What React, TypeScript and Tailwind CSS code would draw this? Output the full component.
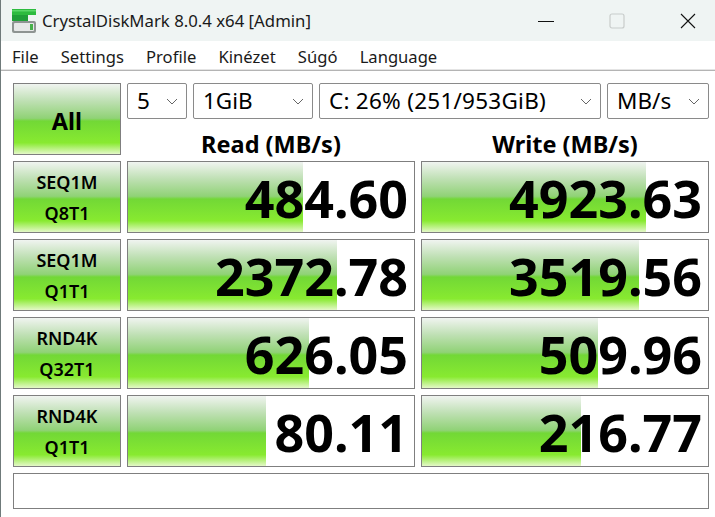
const grad = "bg-[linear-gradient(to_bottom,#f0f4f0_0%,#bfe0b4_24%,#90d276_49%,#72d836_53%,#88ea30_84%,#e4f8c8_100%)]";
const font = "font-['Noto_Sans','Open_Sans',sans-serif]";

function Combo({ label, w, extra = "" }: { label: string; w: string; extra?: string }) {
  return (
    <div className={`${w} h-[36px] border border-[#8a8a8a] rounded-[2px] bg-white flex items-center justify-between pl-[9px] pr-[8px] text-[22.5px] text-black`}>
      <span className={extra}>{label}</span>
      <svg width="12" height="7" viewBox="0 0 12 7" fill="none" stroke="#666" strokeWidth="1" className="shrink-0">
        <path d="M1 1l5 5 5-5" />
      </svg>
    </div>
  );
}

function TestBtn({ a, b }: { a: string; b: string }) {
  return (
    <div className={`h-[72px] border border-[#7f7f7f] ${grad} flex flex-col items-center justify-center gap-[7px] pt-[1px] text-[18px] font-semibold leading-[24px] text-black`}>
      <span>{a}</span>
      <span>{b}</span>
    </div>
  );
}

function Cell({ value, bar }: { value: string; bar: string }) {
  return (
    <div className="relative h-[72px] border border-[#7f7f7f] bg-white overflow-hidden">
      <div className={`absolute left-0 top-0 bottom-0 ${bar} ${grad}`} />
      <div className="relative h-full flex items-center justify-end pr-[6px] pt-[2px] text-[52px] font-bold leading-none text-black">
        {value}
      </div>
    </div>
  );
}

const rows = [
  { a: "SEQ1M", b: "Q8T1", r: "484.60", rb: "w-[175px]", w: "4923.63", wb: "w-[224px]" },
  { a: "SEQ1M", b: "Q1T1", r: "2372.78", rb: "w-[209px]", w: "3519.56", wb: "w-[217px]" },
  { a: "RND4K", b: "Q32T1", r: "626.05", rb: "w-[181px]", w: "509.96", wb: "w-[176px]" },
  { a: "RND4K", b: "Q1T1", r: "80.11", rb: "w-[138px]", w: "216.77", wb: "w-[159px]" },
];

export default function App() {
  return (
    <div className={`w-[715px] h-[517px] bg-white overflow-hidden border-l border-[#6f7a7a] ${font}`}>
      <div className="h-[41px] bg-[#eff4f3] flex items-center pl-[11px]">
        <svg width="24" height="24" viewBox="0 0 24 24" className="shrink-0">
          <rect x="0" y="0" width="24" height="6" fill="#2dbb3f" />
          <rect x="0" y="1" width="24" height="1.5" fill="#5ad868" />
          <rect x="0" y="6" width="16" height="6" fill="#1f9f38" />
          <rect x="0" y="12" width="24" height="12" rx="2" fill="#8e9492" />
          <rect x="2" y="14" width="20" height="8" rx="1" fill="#e6e8e8" />
          <rect x="18" y="15" width="3" height="6" fill="#46b04a" />
        </svg>
        <span className="ml-[6px] text-[16.75px] text-[#1a1a1a]">CrystalDiskMark 8.0.4 x64 [Admin]</span>
        <div className="ml-auto flex items-center">
          <svg width="16" height="16" viewBox="0 0 16 16" className="mr-[55px]" stroke="#111" fill="none"><path d="M0 8.5h16" /></svg>
          <svg width="16" height="16" viewBox="0 0 16 16" className="mr-[55px]" stroke="#c8cccb" strokeWidth="1.2" fill="none"><rect x="1" y="1" width="14" height="14" rx="2" /></svg>
          <svg width="16" height="16" viewBox="0 0 16 16" className="mr-[19px]" stroke="#111" strokeWidth="1.1" fill="none"><path d="M1 1l14 14M15 1L1 15" /></svg>
        </div>
      </div>
      <div className="h-[28px] flex items-center pt-[4px] pl-[11px] gap-[22.2px] text-[16.6px] text-[#1a1a1a]">
        <span>File</span><span>Settings</span><span>Profile</span><span>Kinézet</span><span>Súgó</span><span>Language</span>
      </div>
      <div className="h-[2px] bg-[#e4e4e4] border-b border-[#b4b4b4]" />
      <div className="pl-[12px] pt-[12px]">
        <div className="grid grid-cols-[108px_288px_288px] gap-[6px]">
          <div className={`row-span-2 h-[72px] border border-[#7f7f7f] ${grad} flex items-center justify-center pt-[5px] text-[23.5px] font-bold text-black`}>All</div>
          <div className="col-span-2 flex gap-[6px]">
            <Combo label="5" w="w-[60px]" />
            <Combo label="1GiB" w="w-[120px]" />
            <Combo label="C: 26% (251/953GiB)" w="w-[282px]" extra="tracking-[0.25px]" />
            <Combo label="MB/s" w="w-[102px]" />
          </div>
          <div className="h-[30px] flex justify-center pt-[4px] text-[23.5px] leading-[30px] font-bold text-black">Read (MB/s)</div>
          <div className="h-[30px] flex justify-center pt-[4px] text-[23.5px] leading-[30px] font-bold text-black">Write (MB/s)</div>
          {rows.flatMap((r) => [
            <TestBtn key={r.a + r.b} a={r.a} b={r.b} />,
            <Cell key={r.r} value={r.r} bar={r.rb} />,
            <Cell key={r.w} value={r.w} bar={r.wb} />,
          ])}
          <div className="col-span-3 h-[36px] border border-[#7f7f7f] bg-white" />
        </div>
      </div>
    </div>
  );
}
